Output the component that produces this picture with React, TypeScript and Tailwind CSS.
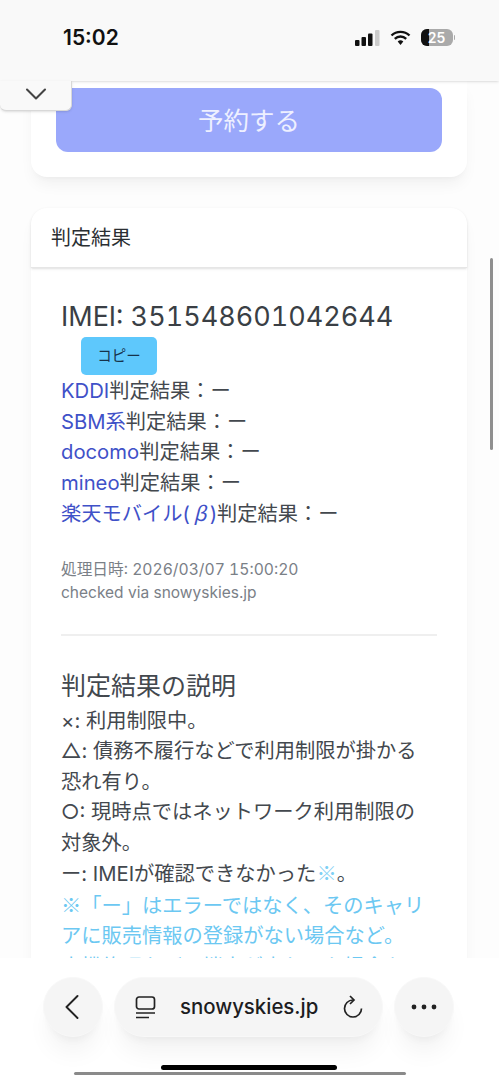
import { ChevronDown, ChevronLeft } from 'lucide-react'

const carriers = ['KDDI', 'SBM系', 'docomo', 'mineo']

function StatusIcons() {
  return (
    <div className="flex items-center gap-[10px]">
      <svg width="25" height="16" viewBox="0 0 25 16">
        <rect x="0" y="10" width="4.5" height="6" rx="1" fill="#111" />
        <rect x="6.5" y="7" width="4.5" height="9" rx="1" fill="#111" />
        <rect x="13" y="3.5" width="4.5" height="12.5" rx="1" fill="#111" />
        <rect x="20" y="0" width="4.5" height="16" rx="1" fill="#ccc" />
      </svg>
      <svg width="21" height="16" viewBox="0 0 21 16">
        <path d="M1.5 5.5a13 13 0 0 1 18 0M4.8 8.8a8.4 8.4 0 0 1 11.4 0" fill="none" stroke="#111" strokeWidth="2.4" />
        <path d="M7.7 11.6a4 4 0 0 1 5.6 0L10.5 15z" fill="#111" />
      </svg>
      <div className="flex items-center gap-[1px]">
        <div className="relative flex h-[17px] w-[32px] items-center justify-center overflow-hidden rounded-[6px] bg-[#aaaaaa]">
          <div className="absolute left-0 top-0 h-full w-[8px] bg-[#111]" />
          <span className="relative text-[14px] font-semibold leading-none text-white">25</span>
        </div>
        <div className="h-[5px] w-[1.5px] rounded-r-full bg-[#aaaaaa]" />
      </div>
    </div>
  )
}

function BottomBar() {
  return (
    <div className="absolute inset-x-0 bottom-0 h-[122px] bg-white">
      <div className="mt-[19px] flex items-center pl-[43px]">
        <div className="flex h-[60px] w-[60px] items-center justify-center rounded-full border border-[#f8f8f8] bg-[#f5f5f5] shadow-xl shadow-black/5">
          <ChevronLeft size={44} strokeWidth={1.05} color="#222" className="-ml-[2px]" />
        </div>
        <div className="ml-[11px] flex h-[60px] w-[269px] items-center rounded-full border border-[#f8f8f8] bg-[#f5f5f5] pl-[20px] shadow-xl shadow-black/5">
          <svg width="21" height="23" viewBox="0 0 21 23" fill="none" stroke="#222" strokeWidth="1.7">
            <rect x="1.5" y="1" width="18" height="12" rx="2.5" />
            <path d="M1 17h19M1 21.5h13" />
          </svg>
          <span className="ml-[24px] text-[20.4px] font-medium text-[#1d1d1f]">snowyskies.jp</span>
          <svg width="22" height="24" viewBox="0 0 22 24" fill="none" stroke="#222" strokeWidth="1.7" className="ml-[24px]">
            <path d="M11 5a8.5 8.5 0 1 0 8.5 8.5" />
            <path d="M8 1l4 4-4 4" />
          </svg>
        </div>
        <div className="ml-[11px] flex h-[60px] w-[60px] items-center justify-center rounded-full border border-[#f8f8f8] bg-[#f5f5f5] shadow-xl shadow-black/5">
          <svg width="26" height="6" viewBox="0 0 26 6" fill="#222">
            <circle cx="3" cy="3" r="2.4" />
            <circle cx="13" cy="3" r="2.4" />
            <circle cx="23" cy="3" r="2.4" />
          </svg>
        </div>
      </div>
      <div className="mx-auto mt-[28px] h-[5px] w-[176px] -translate-x-[1px] rounded-full bg-black" />
      <div className="ml-[74px] mt-[2px] h-[3px] w-[332px] rounded-full bg-[#8a8a8a]" />
    </div>
  )
}

export default function App() {
  return (
    <div className="relative h-[1080px] overflow-hidden bg-[#fdfdfd] font-[Inter,'Noto_Sans_CJK_JP',sans-serif]">
      {/* Header */}
      <header className="relative z-10 flex h-[81px] items-start justify-between bg-[#f9f9f9] pl-[63px] pr-[44px] pt-[23px] shadow-sm">
        <span className="text-[21px] font-semibold leading-[30px] text-[#111]">15:02</span>
        <div className="pt-[6px]">
          <StatusIcons />
        </div>
      </header>

      <div className="absolute left-0 top-[81px] z-20 flex h-[30px] w-[72px] items-center justify-center rounded-b-[6px] border-b border-r border-[#d8d8d8] bg-[#f9f9f9] pb-[3px] shadow-sm">
        <ChevronDown size={36} strokeWidth={1.4} color="#444" />
      </div>

      <main className="flex flex-col gap-[31px] pl-[31px] pr-[32px]">
        {/* Reserve card */}
        <section className="rounded-b-[16px] bg-white px-[25px] pb-[25px] pt-[7px] shadow-lg shadow-black/5">
          <button className="h-[64px] w-full rounded-[12px] bg-[#9aa8fb] pt-[2px] text-[25.5px] text-[#eef0ff]">予約する</button>
        </section>

        {/* Result card */}
        <section className="rounded-[16px] bg-white pb-[120px] shadow-lg shadow-black/5">
          <div className="flex h-[60px] items-center rounded-t-[16px] border-b border-[#e6e6e6] pl-[20px] text-[20px] text-[#2b2f33] shadow-sm">判定結果</div>
          <div className="pl-[30px] pr-[30px] pt-[32px] text-[20.25px] leading-[30.5px] text-[#43484e]">
            <h2 className="text-[27px] leading-[34px] tabular-nums text-[#3a3f45]">IMEI: 351548601042644</h2>
            <button className="ml-[20px] mt-[3px] block h-[38px] w-[76px] rounded-[5px] bg-[#5ec8fc] text-[14.5px] text-[#16324a]">コピー</button>
            <div className="mt-[1px]">
              {carriers.map(name => (
                <div key={name}>
                  <span className="text-[#3f51c8]">{name}</span>判定結果：ー
                </div>
              ))}
              <div>
                <span className="text-[#3f51c8]">
                  楽天モバイル(<span className="inline-block px-[3.5px] font-['Noto_Sans_CJK_JP'] italic">β</span>)
                </span>
                判定結果：ー
              </div>
            </div>
            <div className="mt-[28px] text-[15.7px] leading-[23.5px] text-[#7a8087]">
              <div className="tabular-nums">処理日時: 2026/03/07 15:00:20</div>
              <div className="text-[15.5px]">checked via snowyskies.jp</div>
            </div>
            <hr className="mt-[29px] border-t-2 border-[#efefef]" />
            <h3 className="mt-[30px] text-[25px] leading-[40px]">判定結果の説明</h3>
            <div className="pr-[4px]">
              <div>×: 利用制限中。</div>
              <div>△: 債務不履行などで利用制限が掛かる恐れ有り。</div>
              <div>○: 現時点ではネットワーク利用制限の対象外。</div>
              <div>
                ー: IMEIが確認できなかった<span className="font-['Noto_Sans_CJK_JP'] text-[#7fd0f5]">※</span>。
              </div>
              <div className="text-[#6cc8f2]">
                <span className="font-['Noto_Sans_CJK_JP']">※</span>「ー」はエラーではなく、そのキャリアに販売情報の登録がない場合など。
              </div>
              <div className="text-[#6cc8f2]">本機修理などで端末が変わった場合も</div>
            </div>
          </div>
        </section>
      </main>

      {/* Scrollbar */}
      <div className="absolute right-[6px] top-[258px] h-[192px] w-[3px] rounded-full bg-[#8f8f8f]" />

      <BottomBar />
    </div>
  )
}
